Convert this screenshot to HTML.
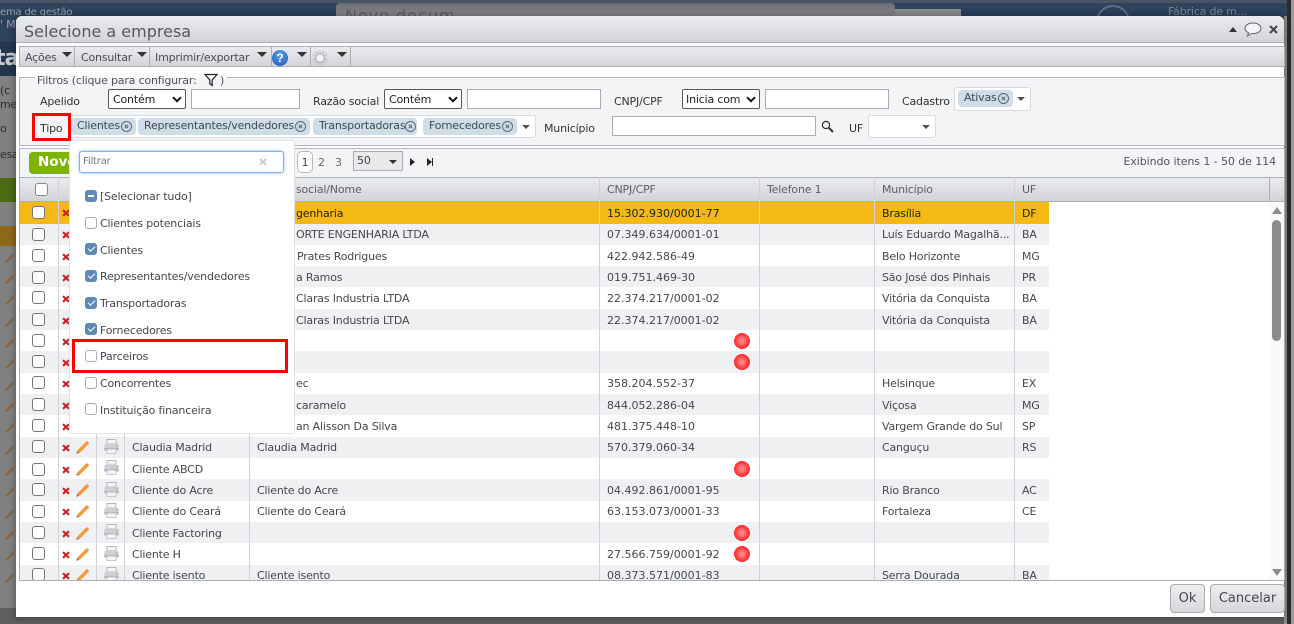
<!DOCTYPE html>
<html lang="pt"><head><meta charset="utf-8"><title>Selecione a empresa</title>
<style>
html,body{margin:0;padding:0}
body{width:1294px;height:624px;overflow:hidden;position:relative;background:#787878;font:11px/14px "DejaVu Sans",sans-serif;color:#44484e;letter-spacing:-.18px}
div,span,svg{position:absolute;box-sizing:border-box;white-space:nowrap}
.dlg{left:16px;top:16px;width:1268px;height:601px;background:#fff;border-radius:6px 6px 0 0;box-shadow:0 0 6px 2px rgba(0,0,0,.25)}
.grad{background:linear-gradient(#eaebed,#d2d4d8)}
.ar{width:0;height:0;border-left:5px solid transparent;border-right:5px solid transparent;border-top:5px solid #333}
.inp{background:#fff;border:1px solid #a9aeb3;height:20px}
.sel{background:#fff;border:1px solid #55595e;border-radius:2px;height:20px;padding:3px 0 0 4px;color:#222;line-height:14px}
.sel svg{right:3px;top:6px}
.lb{color:#333;line-height:14px}
.tag{background:#cfdde9;border-radius:4px;height:17px;line-height:16px;padding-left:6px;color:#44484e}
.tag i{position:absolute;right:4px;top:3px;width:11px;height:11px;border:1px solid #5d6670;border-radius:50%;box-sizing:border-box}
.tag i:after{content:"";position:absolute;left:2px;top:2px;width:5px;height:5px;background:linear-gradient(#5d6670,#5d6670) center/100% 1px no-repeat,linear-gradient(#5d6670,#5d6670) center/1px 100% no-repeat;transform:rotate(45deg)}
.cb{width:13px;height:13px;background:#fff;border:1.5px solid #777;border-radius:3px}
.r{left:20px;width:1029px;line-height:24px}
.r span{top:0;color:#44484e}
.g{background:#eff0f2}
.a{left:112px}.b{left:237px}.c{left:587px;letter-spacing:0}.d{left:862px}.e{left:1002px}.f{left:276px}
.dot{left:714px;top:3px;width:16px;height:16px;border-radius:50%;background:radial-gradient(circle at 50% 50%,#ff9a9a,#f33 60%,#ee2a2a)}
.vl{top:177px;width:1px;height:403px;background:#cfd2d6}
.m{left:85px;width:12px;height:12px;border:1px solid #a8aeb6;border-radius:3px;background:#fff}
.m.on{background:#5f8ab8;border-color:#5f8ab8}
.m.on:after{content:"";position:absolute;left:2px;top:2px;width:6px;height:3px;border-left:1.6px solid #fff;border-bottom:1.6px solid #fff;transform:rotate(-45deg)}
.mt{left:100px;color:#44484e;line-height:14px}
.hd{top:183px;color:#5b6067;line-height:14px}
.btn{top:584px;height:29px;border:1px solid #a9aeb3;border-radius:4px;background:linear-gradient(#eceded,#d6d8db);text-align:center;line-height:27px;font-size:13px;color:#44484e;letter-spacing:0}
.red{border:3px solid #f00;z-index:30}
.bgt{color:#9aa3ad}
.bp{left:4px;opacity:.75}
</style></head><body>
<svg width="0" height="0" style="left:0;top:0"><defs>
<symbol id="x" viewBox="0 0 8 8"><path d="M1 1.2L7 6.8M7 1.2L1 6.8" stroke="#cc2128" stroke-width="2.1"/></symbol>
<symbol id="p" viewBox="0 0 14 14"><path d="M1.2 11L10.8 1.2L13 3.3L3.2 13Z" fill="#f29a3c" stroke="#ea8f2c" stroke-width=".5"/><path d="M.4 13.7L1.1 11.2L3 13Z" fill="#8a6a44"/></symbol>
<symbol id="t" viewBox="0 0 15 15"><path d="M3 .5H12V5H3Z" fill="#f3f4f5" stroke="#b4b8bc"/><path d="M1 5H14Q14.7 5 14.7 6V11.5H.3V6Q.3 5 1 5Z" fill="#ccd0d3"/><path d="M0.3 9H14.7V11.5H.3Z" fill="#b4b8bd"/><path d="M3 10H12V14.5H3Z" fill="#f3f4f5" stroke="#b8bcc0" stroke-width=".8"/><rect x="12" y="6" width="1.6" height="1.4" fill="#a6c65a"/><rect x="12" y="7.6" width="1.6" height="1" fill="#e6c04c"/></symbol>
<symbol id="chev" viewBox="0 0 10 7"><path d="M1 1.2L5 5.2L9 1.2" fill="none" stroke="#111" stroke-width="2"/></symbol>
<symbol id="bp" viewBox="0 0 14 14"><path d="M1.2 11L10.8 1.2L13 3.3L3.2 13Z" fill="#8a5f34"/></symbol>
</defs></svg>

<!-- fundo -->
<div style="left:0;top:0;width:1294px;height:42px;background:#2d425c"></div>
<div style="left:0;top:0;width:1294px;height:3px;background:#4a5361"></div>
<div style="left:336px;top:3px;width:559px;height:13px;background:linear-gradient(#666b72,#8a8c8f);border-radius:4px 4px 0 0"></div>
<div style="left:895px;top:9px;width:66px;height:7px;background:#8a8c8f"></div>
<div style="left:345px;top:7px;font-size:16px;line-height:18px;color:#5c6066;letter-spacing:1px;height:9px;overflow:hidden">Novo docum</div>
<div class="bgt" style="left:0;top:6px;font-size:10px">ema de gestão</div>
<div class="bgt" style="left:0;top:18px;font-size:11px">' M</div>
<div class="bgt" style="left:1168px;top:5px;font-size:11px;color:#7b8796">Fábrica de m...</div>
<div style="left:1096px;top:5px;width:34px;height:34px;border:2px solid #5f6f83;border-radius:50%"></div>
<div style="left:0;top:42px;width:16px;height:34px;background:#24364d;color:#c8ccd2;font:bold 22px/34px 'DejaVu Sans',sans-serif;overflow:hidden;letter-spacing:-1px"><span style="left:-5px;top:0">ta</span></div>
<div style="left:0;top:76px;width:16px;height:548px;background:#808080"></div>
<div style="left:0;top:178px;width:16px;height:24px;background:#4c6a12"></div>
<div style="left:0;top:226px;width:16px;height:20px;background:#8c6a16"></div>
<svg class="bp" style="top:231px" width="11" height="11"><use href="#bp"/></svg><svg class="bp" style="top:253px" width="11" height="11"><use href="#bp"/></svg><svg class="bp" style="top:274px" width="11" height="11"><use href="#bp"/></svg><svg class="bp" style="top:295px" width="11" height="11"><use href="#bp"/></svg><svg class="bp" style="top:317px" width="11" height="11"><use href="#bp"/></svg><svg class="bp" style="top:338px" width="11" height="11"><use href="#bp"/></svg><svg class="bp" style="top:359px" width="11" height="11"><use href="#bp"/></svg><svg class="bp" style="top:381px" width="11" height="11"><use href="#bp"/></svg><svg class="bp" style="top:402px" width="11" height="11"><use href="#bp"/></svg><svg class="bp" style="top:423px" width="11" height="11"><use href="#bp"/></svg><svg class="bp" style="top:445px" width="11" height="11"><use href="#bp"/></svg><svg class="bp" style="top:466px" width="11" height="11"><use href="#bp"/></svg><svg class="bp" style="top:487px" width="11" height="11"><use href="#bp"/></svg><svg class="bp" style="top:509px" width="11" height="11"><use href="#bp"/></svg><svg class="bp" style="top:530px" width="11" height="11"><use href="#bp"/></svg><svg class="bp" style="top:551px" width="11" height="11"><use href="#bp"/></svg><svg class="bp" style="top:573px" width="11" height="11"><use href="#bp"/></svg>
<div style="left:0;top:608px;width:1294px;height:16px;background:#5f5f5f"></div>
<div style="left:1284px;top:16px;width:3px;height:608px;background:#8f8f8f"></div>
<div style="left:1287px;top:0;width:4px;height:624px;background:#2b2b2b"></div>
<div style="left:1291px;top:0;width:3px;height:624px;background:#9c9c9c"></div>
<div style="left:0;top:84px;font-size:11px;color:#2e2e2e">(c</div>
<div style="left:0;top:98px;color:#2e2e2e">me</div>
<div style="left:0;top:122px;color:#2e2e2e">o</div>
<div style="left:0;top:148px;color:#2e2e2e">esa</div>

<!-- diálogo -->
<div class="dlg"></div>
<div class="grad" style="left:16px;top:16px;width:1268px;height:27px;border-radius:6px 6px 0 0;border-bottom:1px solid #aab0b7"></div>
<div style="left:24px;top:22px;font-size:16px;line-height:20px;color:#54585e;letter-spacing:0">Selecione a empresa</div>
<div style="left:1229px;top:27px;width:0;height:0;border-left:4px solid transparent;border-right:4px solid transparent;border-bottom:5px solid #333"></div>
<svg style="left:1244px;top:22px" width="18" height="15" viewBox="0 0 18 15"><path d="M9 1C4.5 1 1 3.3 1 6.3C1 8.3 2.6 9.9 4.7 10.8L3.3 14L7.8 11.5C8.2 11.6 8.6 11.6 9 11.6C13.5 11.6 17 9.3 17 6.3S13.5 1 9 1Z" fill="#f4f5f6" stroke="#5d6670"/></svg>
<svg style="left:1269px;top:25px" width="9" height="9" viewBox="0 0 9 9"><path d="M1 1L8 8M8 1L1 8" stroke="#444" stroke-width="2"/></svg>

<!-- barra de ferramentas -->
<div class="grad" style="left:19px;top:46px;width:1266px;height:21px;border:1px solid #a9b0b8"></div>
<div style="left:25px;top:51px;color:#4a4f56">Ações</div><div class="ar" style="left:62px;top:52px"></div>
<div style="left:74px;top:47px;width:1px;height:19px;background:#a9b0b8"></div>
<div style="left:81px;top:51px;color:#4a4f56">Consultar</div><div class="ar" style="left:137px;top:52px"></div>
<div style="left:149px;top:47px;width:1px;height:19px;background:#a9b0b8"></div>
<div style="left:155px;top:51px;color:#4a4f56">Imprimir/exportar</div><div class="ar" style="left:257px;top:52px"></div>
<div style="left:271px;top:47px;width:1px;height:19px;background:#a9b0b8"></div>
<div style="left:272px;top:50px;width:16px;height:16px;border-radius:50%;background:radial-gradient(circle at 50% 30%,#5c9fe8,#1c57b2);color:#fff;font:bold 12px/16px 'Liberation Sans',sans-serif;text-align:center">?</div>
<div class="ar" style="left:297px;top:52px"></div>
<div style="left:310px;top:47px;width:1px;height:19px;background:#a9b0b8"></div>
<svg style="left:312px;top:50px" width="16" height="16" viewBox="0 0 16 16"><circle cx="8" cy="8" r="4.4" fill="#f4f5f6" stroke="#b4b7bb" stroke-width="1.6"/><circle cx="8" cy="8" r="6.6" fill="none" stroke="#c4c7ca" stroke-width="1.8" stroke-dasharray="2.2 1.5"/></svg>
<div class="ar" style="left:337px;top:52px"></div>
<div style="left:350px;top:47px;width:1px;height:19px;background:#a9b0b8"></div>

<!-- filtros -->
<div style="left:19px;top:77px;width:1266px;height:69px;background:#f3f4f5;border:1px solid #b1b7bd"></div>
<div style="left:35px;top:74px;width:192px;height:8px;background:#fff"></div>
<div style="left:35px;top:78px;width:192px;height:6px;background:#f3f4f5"></div>
<div style="left:37px;top:74px;color:#50555b">Filtros (clique para configurar:</div>
<svg style="left:204px;top:73px" width="14" height="14" viewBox="0 0 14 14"><path d="M1 1.5H13L8.2 7V12.5L5.8 10.8V7Z" fill="none" stroke="#222" stroke-width="1.2"/></svg>
<div style="left:220px;top:74px;color:#50555b">)</div>

<div class="lb" style="left:40px;top:95px">Apelido</div>
<div class="sel" style="left:108px;top:89px;width:78px">Contém<svg width="10" height="7"><use href="#chev"/></svg></div>
<div class="inp" style="left:191px;top:89px;width:109px"></div>
<div class="lb" style="left:313px;top:95px">Razão social</div>
<div class="sel" style="left:384px;top:89px;width:78px">Contém<svg width="10" height="7"><use href="#chev"/></svg></div>
<div class="inp" style="left:467px;top:89px;width:134px"></div>
<div class="lb" style="left:614px;top:95px">CNPJ/CPF</div>
<div class="sel" style="left:682px;top:89px;width:78px;padding-left:3px">Inicia com<svg width="10" height="7"><use href="#chev"/></svg></div>
<div class="inp" style="left:765px;top:89px;width:124px"></div>
<div class="lb" style="left:902px;top:95px">Cadastro</div>
<div style="left:954px;top:87px;width:77px;height:24px;background:#fff;border:1px solid #d6d9dd;border-radius:3px"></div>
<div class="tag" style="left:958px;top:90px;width:55px">Ativas<i></i></div>
<div class="ar" style="left:1017px;top:97px;border-left-width:4px;border-right-width:4px;border-top:4px solid #555"></div>

<div class="lb" style="left:40px;top:122px;z-index:31">Tipo</div>
<div style="left:69px;top:115px;width:467px;height:23px;background:#fff;border:1px solid #d6d9dd;border-radius:3px"></div>
<div class="tag" style="left:71px;top:118px;width:65px">Clientes<i></i></div>
<div class="tag" style="left:138px;top:118px;width:172px">Representantes/vendedores<i></i></div>
<div class="tag" style="left:313px;top:118px;width:104px">Transportadoras<i style="right:1px"></i></div>
<div class="tag" style="left:423px;top:118px;width:94px">Fornecedores<i></i></div>
<div class="ar" style="left:522px;top:125px;border-left-width:4px;border-right-width:4px;border-top:4px solid #555"></div>
<div class="lb" style="left:544px;top:122px">Município</div>
<div class="inp" style="left:612px;top:116px;width:204px"></div>
<svg style="left:821px;top:120px" width="13" height="13" viewBox="0 0 13 13"><circle cx="5" cy="5" r="3.6" fill="none" stroke="#333" stroke-width="1.2"/><path d="M8 8L12 12" stroke="#333" stroke-width="2"/></svg>
<div class="lb" style="left:849px;top:122px">UF</div>
<div style="left:868px;top:115px;width:68px;height:23px;background:#fff;border:1px solid #d6d9dd;border-radius:3px"></div>
<div class="ar" style="left:922px;top:125px;border-left-width:4px;border-right-width:4px;border-top:4px solid #555"></div>

<!-- paginação -->
<div style="left:19px;top:148px;width:1266px;height:30px;background:#f3f4f5;border:1px solid #b1b7bd;border-bottom:0"></div>
<div style="left:29px;top:152px;width:50px;height:22px;background:#7cb305;border-radius:4px;color:#fff;font:bold 13.5px/21px 'DejaVu Sans',sans-serif;padding-left:9px;overflow:hidden;letter-spacing:0">Novo</div>
<div style="left:297px;top:151px;width:16px;height:22px;background:#fff;border:1px solid #b5babf;border-radius:5px;text-align:center;line-height:22px;color:#444">1</div>
<div style="left:318px;top:156px;color:#666">2</div>
<div style="left:335px;top:156px;color:#666">3</div>
<div style="left:353px;top:151px;width:50px;height:20px;background:#e8e9eb;border:1px solid #a9aeb3;line-height:18px;padding-left:3px;color:#444">50</div>
<div class="ar" style="left:389px;top:160px;border-left-width:4px;border-right-width:4px;border-top:4px solid #333"></div>
<div style="left:410px;top:158px;width:0;height:0;border-top:4px solid transparent;border-bottom:4px solid transparent;border-left:5px solid #222"></div>
<div style="left:427px;top:158px;width:0;height:0;border-top:4px solid transparent;border-bottom:4px solid transparent;border-left:5px solid #222"></div>
<div style="left:432px;top:158px;width:1px;height:8px;background:#222"></div>
<div style="right:18px;top:155px;color:#50555b;letter-spacing:-.08px">Exibindo itens 1 - 50 de 114</div>

<!-- cabeçalho -->
<div class="grad" style="left:19px;top:177px;width:1266px;height:25px;border:1px solid #a9b0b8"></div>
<div class="cb" style="left:35px;top:183px;border-color:#888"></div>
<div class="hd" style="left:296px">social/Nome</div>
<div class="hd" style="left:607px">CNPJ/CPF</div>
<div class="hd" style="left:767px">Telefone 1</div>
<div class="hd" style="left:882px">Município</div>
<div class="hd" style="left:1022px">UF</div>
<div style="left:1269px;top:177px;width:1px;height:25px;background:#a9b0b8"></div>

<!-- linhas -->
<div style="left:19px;top:202px;width:1266px;height:379px;border:1px solid #a9b0b8;border-top:0;background:#fff"></div>
<div style="left:1269px;top:202px;width:15px;height:378px;background:#fafafa"></div>
<div style="left:20px;top:202px;width:1029px;height:378px;overflow:hidden">
<div class="r" style="left:0;top:0;height:22px;background:#f5b915"><span class="f" style="color:#222">genharia</span><span class="c" style="color:#222">15.302.930/0001-77</span><span class="d" style="color:#222">Brasília</span><span class="e" style="color:#222">DF</span></div>
<div class="r g" style="left:0;top:22px;height:21px;line-height:22px"><span class="f">ORTE ENGENHARIA LTDA</span><span class="c">07.349.634/0001-01</span><span class="d">Luís Eduardo Magalhã...</span><span class="e">BA</span></div>
<div class="r" style="left:0;top:43px;height:21px"><span class="f" style="left:277px">Prates Rodrigues</span><span class="c">422.942.586-49</span><span class="d">Belo Horizonte</span><span class="e">MG</span></div>
<div class="r g" style="left:0;top:64px;height:21px"><span class="f">a Ramos</span><span class="c">019.751.469-30</span><span class="d">São José dos Pinhais</span><span class="e">PR</span></div>
<div class="r" style="left:0;top:85px;height:22px"><span class="f">Claras Industria LTDA</span><span class="c">22.374.217/0001-02</span><span class="d">Vitória da Conquista</span><span class="e">BA</span></div>
<div class="r g" style="left:0;top:107px;height:21px"><span class="f">Claras Industria LTDA</span><span class="c">22.374.217/0001-02</span><span class="d">Vitória da Conquista</span><span class="e">BA</span></div>
<div class="r" style="left:0;top:128px;height:21px"><i class="dot" style="position:absolute"></i></div>
<div class="r g" style="left:0;top:149px;height:22px"><i class="dot" style="position:absolute"></i></div>
<div class="r" style="left:0;top:171px;height:21px;line-height:22px"><span class="f">ec</span><span class="c">358.204.552-37</span><span class="d">Helsinque</span><span class="e">EX</span></div>
<div class="r g" style="left:0;top:192px;height:21px"><span class="f">caramelo</span><span class="c">844.052.286-04</span><span class="d">Viçosa</span><span class="e">MG</span></div>
<div class="r" style="left:0;top:213px;height:22px"><span class="f">an Alisson Da Silva</span><span class="c">481.375.448-10</span><span class="d">Vargem Grande do Sul</span><span class="e">SP</span></div>
<div class="r g" style="left:0;top:235px;height:21px;line-height:22px"><span class="a">Claudia Madrid</span><span class="b">Claudia Madrid</span><span class="c">570.379.060-34</span><span class="d">Canguçu</span><span class="e">RS</span></div>
<div class="r" style="left:0;top:256px;height:21px"><span class="a">Cliente ABCD</span><i class="dot" style="position:absolute"></i></div>
<div class="r g" style="left:0;top:277px;height:22px"><span class="a">Cliente do Acre</span><span class="b">Cliente do Acre</span><span class="c">04.492.861/0001-95</span><span class="d">Rio Branco</span><span class="e">AC</span></div>
<div class="r" style="left:0;top:299px;height:21px;line-height:22px"><span class="a">Cliente do Ceará</span><span class="b">Cliente do Ceará</span><span class="c">63.153.073/0001-33</span><span class="d">Fortaleza</span><span class="e">CE</span></div>
<div class="r g" style="left:0;top:320px;height:21px"><span class="a">Cliente Factoring</span><i class="dot" style="position:absolute"></i></div>
<div class="r" style="left:0;top:341px;height:22px"><span class="a">Cliente H</span><span class="c">27.566.759/0001-92</span><i class="dot" style="position:absolute"></i></div>
<div class="r g" style="left:0;top:363px;height:21px;line-height:22px"><span class="a">Cliente isento</span><span class="b">Cliente isento</span><span class="c">08.373.571/0001-83</span><span class="d">Serra Dourada</span><span class="e">BA</span></div>

<!-- checkboxes -->
<div class="cb" style="left:12px;top:4px"></div><div class="cb" style="left:12px;top:26px"></div><div class="cb" style="left:12px;top:47px"></div><div class="cb" style="left:12px;top:69px"></div><div class="cb" style="left:12px;top:89px"></div><div class="cb" style="left:12px;top:111px"></div><div class="cb" style="left:12px;top:132px"></div><div class="cb" style="left:12px;top:153px"></div><div class="cb" style="left:12px;top:174px"></div><div class="cb" style="left:12px;top:196px"></div><div class="cb" style="left:12px;top:217px"></div><div class="cb" style="left:12px;top:238px"></div><div class="cb" style="left:12px;top:261px"></div><div class="cb" style="left:12px;top:281px"></div><div class="cb" style="left:12px;top:303px"></div><div class="cb" style="left:12px;top:324px"></div><div class="cb" style="left:12px;top:345px"></div><div class="cb" style="left:12px;top:366px"></div>

<!-- x -->
<svg style="left:42px;top:7px" width="8" height="8"><use href="#x"/></svg><svg style="left:42px;top:29px" width="8" height="8"><use href="#x"/></svg><svg style="left:42px;top:51px" width="8" height="8"><use href="#x"/></svg><svg style="left:42px;top:72px" width="8" height="8"><use href="#x"/></svg><svg style="left:42px;top:93px" width="8" height="8"><use href="#x"/></svg><svg style="left:42px;top:115px" width="8" height="8"><use href="#x"/></svg><svg style="left:42px;top:136px" width="8" height="8"><use href="#x"/></svg><svg style="left:42px;top:157px" width="8" height="8"><use href="#x"/></svg><svg style="left:42px;top:178px" width="8" height="8"><use href="#x"/></svg><svg style="left:42px;top:200px" width="8" height="8"><use href="#x"/></svg><svg style="left:42px;top:221px" width="8" height="8"><use href="#x"/></svg><svg style="left:42px;top:242px" width="8" height="8"><use href="#x"/></svg><svg style="left:42px;top:264px" width="8" height="8"><use href="#x"/></svg><svg style="left:42px;top:285px" width="8" height="8"><use href="#x"/></svg><svg style="left:42px;top:306px" width="8" height="8"><use href="#x"/></svg><svg style="left:42px;top:328px" width="8" height="8"><use href="#x"/></svg><svg style="left:42px;top:349px" width="8" height="8"><use href="#x"/></svg><svg style="left:42px;top:370px" width="8" height="8"><use href="#x"/></svg>

<!-- lápis e impressora, linhas visíveis -->
<svg style="left:56px;top:238px" width="14" height="14"><use href="#p"/></svg><svg style="left:56px;top:260px" width="14" height="14"><use href="#p"/></svg><svg style="left:56px;top:281px" width="14" height="14"><use href="#p"/></svg><svg style="left:56px;top:302px" width="14" height="14"><use href="#p"/></svg><svg style="left:56px;top:324px" width="14" height="14"><use href="#p"/></svg><svg style="left:56px;top:345px" width="14" height="14"><use href="#p"/></svg><svg style="left:56px;top:366px" width="14" height="14"><use href="#p"/></svg>
<svg style="left:84px;top:237px" width="15" height="15"><use href="#t"/></svg><svg style="left:84px;top:258px" width="15" height="15"><use href="#t"/></svg><svg style="left:84px;top:280px" width="15" height="15"><use href="#t"/></svg><svg style="left:84px;top:301px" width="15" height="15"><use href="#t"/></svg><svg style="left:84px;top:322px" width="15" height="15"><use href="#t"/></svg><svg style="left:84px;top:344px" width="15" height="15"><use href="#t"/></svg><svg style="left:84px;top:365px" width="15" height="15"><use href="#t"/></svg>
</div>

<!-- divisores -->
<div class="vl" style="left:58px"></div><div class="vl" style="left:96px;top:434px;height:146px"></div><div class="vl" style="left:124px;top:434px;height:146px"></div><div class="vl" style="left:249px;top:434px;height:146px"></div>
<div class="vl" style="left:599px"></div><div class="vl" style="left:759px"></div><div class="vl" style="left:874px"></div><div class="vl" style="left:1014px"></div>
<div style="left:19px;top:580px;width:1266px;height:1px;background:#a9b0b8"></div>

<!-- barra de rolagem -->
<div style="left:1272px;top:207px;width:0;height:0;border-left:5px solid transparent;border-right:5px solid transparent;border-bottom:7px solid #8c8c8c"></div>
<div style="left:1272px;top:220px;width:9px;height:121px;background:#8c8c8c;border-radius:5px"></div>
<div style="left:1272px;top:569px;width:0;height:0;border-left:5px solid transparent;border-right:5px solid transparent;border-top:7px solid #8c8c8c"></div>

<!-- menu Tipo -->
<div style="left:69px;top:140px;width:226px;height:294px;background:#fff;border:1px solid #e0e2e5;border-radius:0 3px 3px 3px;z-index:10"></div>
<div style="left:79px;top:151px;width:205px;height:22px;background:#fff;border:1px solid #7fb2ea;border-radius:3px;box-shadow:0 0 3px #8fc0f2;color:#777;font-size:10px;line-height:20px;padding-left:3px;z-index:11">Filtrar</div>
<svg style="left:259px;top:158px;z-index:11" width="8" height="8" viewBox="0 0 8 8"><path d="M1 1L7 7M7 1L1 7" stroke="#c4c7ca" stroke-width="1.6"/></svg>
<div style="z-index:11;left:0;top:0">
<div class="m" style="top:190px;background:#5f8ab8;border-color:#5f8ab8"><i style="position:absolute;left:2px;top:4px;width:6px;height:2px;background:#fff"></i></div><div class="mt" style="top:190px">[Selecionar tudo]</div>
<div class="m" style="top:217px"></div><div class="mt" style="top:217px">Clientes potenciais</div>
<div class="m on" style="top:243px"></div><div class="mt" style="top:244px">Clientes</div>
<div class="m on" style="top:270px"></div><div class="mt" style="top:270px">Representantes/vendedores</div>
<div class="m on" style="top:297px"></div><div class="mt" style="top:297px">Transportadoras</div>
<div class="m on" style="top:323px"></div><div class="mt" style="top:324px">Fornecedores</div>
<div class="m" style="top:350px"></div><div class="mt" style="top:350px">Parceiros</div>
<div class="m" style="top:377px"></div><div class="mt" style="top:377px">Concorrentes</div>
<div class="m" style="top:403px"></div><div class="mt" style="top:404px">Instituição financeira</div>
</div>

<!-- destaques -->
<div class="red" style="left:32px;top:113px;width:39px;height:28px"></div>
<div class="red" style="left:72px;top:339px;width:216px;height:34px"></div>

<!-- botões -->
<div class="btn" style="left:1170px;width:35px">Ok</div>
<div class="btn" style="left:1210px;width:75px">Cancelar</div>
</body></html>
